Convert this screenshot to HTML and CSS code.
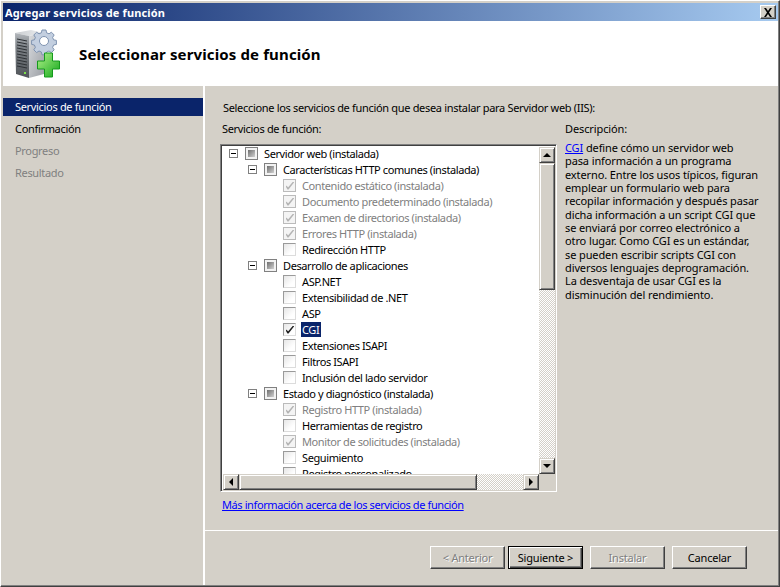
FILE: index.html
```html
<!DOCTYPE html>
<html lang="es">
<head>
<meta charset="utf-8">
<title>Agregar servicios de función</title>
<link rel="stylesheet" href="styles.css">
</head>
<body>
<div class="window">
  <div class="titlebar">
    <span class="title-text">Agregar servicios de función</span>
    <button class="close" aria-label="Cerrar"><svg width="10" height="9" viewBox="0 0 10 9"><path d="M1 0h2l2 3 2-3h2L6 4.500 9 9H7L5 6 3 9H1l3-4.500z" fill="#000"/></svg></button>
  </div>
  <header class="banner">
    <svg class="wizard-icon" width="46" height="50" viewBox="0 0 46 50">
      <defs>
        <linearGradient id="front" x1="0" x2="0" y1="0" y2="1"><stop offset="0" stop-color="#b4b8bd"/><stop offset=".3" stop-color="#7d8287"/><stop offset="1" stop-color="#4f5358"/></linearGradient>
        <linearGradient id="side" x1="0" x2="1" y1="0" y2="1"><stop offset="0" stop-color="#d9dbde"/><stop offset="1" stop-color="#9a9ea4"/></linearGradient>
        <linearGradient id="top" x1="0" x2="1" y1="0" y2="0"><stop offset="0" stop-color="#c9ccd0"/><stop offset="1" stop-color="#eceef0"/></linearGradient>
        <linearGradient id="plus" x1="0" x2="1" y1="0" y2="1"><stop offset="0" stop-color="#b4f28c"/><stop offset="1" stop-color="#12a81a"/></linearGradient>
      </defs>
      <path d="M1 4 17 1 30 4 15 7z" fill="url(#top)"/>
      <path d="M15 7 30 4v41L15 49z" fill="url(#side)"/>
      <path d="M1 4 15 7v42L2 45z" fill="url(#front)"/>
      <path d="M3 10 13 12M3 13 13 15M3 16 13 18M3 19 13 21M3 22 13 24M3 25 13 27M3 28 13 30M3 31 13 33M3 34 13 36M3 37 13 39" stroke="#2e3236" stroke-width="1"/>
      <rect x="10" y="43" width="2" height="2" fill="#7be04a"/>
      <g transform="translate(30 12)">
        <path d="M-2-11h4l.6 2.800 2.400 1 2.400-1.600 2.800 2.800-1.600 2.400 1 2.400 2.800.6v4l-2.800.6-1 2.400 1.600 2.400-2.800 2.800-2.400-1.600-2.400 1-.6 2.800h-4l-.6-2.800-2.400-1-2.400 1.600-2.800-2.800 1.600-2.400-1-2.400-2.800-.6v-4l2.800-.6 1-2.400-1.600-2.400 2.800-2.800 2.400 1.600 2.400-1z" fill="#c3cfe0" stroke="#7f93b0"/>
        <circle r="4.500" fill="#fff" stroke="#7f93b0"/>
      </g>
      <path d="M30.500 24h8v8h7v8h-7v8h-8v-8h-7v-8h7z" fill="url(#plus)" stroke="#149a1c"/>
    </svg>
    <h1 class="banner-title">Seleccionar servicios de función</h1>
  </header>
  <div class="main">
    <nav class="steps">
      <div class="step current">Servicios de función</div>
      <div class="step">Confirmación</div>
      <div class="step pending">Progreso</div>
      <div class="step pending">Resultado</div>
    </nav>
    <div class="content">
      <div class="panel">
        <p class="intro">Seleccione los servicios de función que desea instalar para Servidor web (IIS):</p>
        <div class="columns">
          <div class="left-col">
            <div class="label">Servicios de función:</div>
            <div class="tree">
              <div class="tree-view">
                <div class="rows">
                  <div class="row l0"><i class="exp"></i><i class="cb mixed"></i><span>Servidor web (instalada)</span></div>
                  <div class="row l1"><i class="exp"></i><i class="cb mixed"></i><span>Características HTTP comunes (instalada)</span></div>
                  <div class="row l2 off"><i class="cb dis"></i><span>Contenido estático (instalada)</span></div>
                  <div class="row l2 off"><i class="cb dis"></i><span>Documento predeterminado (instalada)</span></div>
                  <div class="row l2 off"><i class="cb dis"></i><span>Examen de directorios (instalada)</span></div>
                  <div class="row l2 off"><i class="cb dis"></i><span>Errores HTTP (instalada)</span></div>
                  <div class="row l2"><i class="cb"></i><span>Redirección HTTP</span></div>
                  <div class="row l1"><i class="exp"></i><i class="cb mixed"></i><span>Desarrollo de aplicaciones</span></div>
                  <div class="row l2"><i class="cb"></i><span>ASP.NET</span></div>
                  <div class="row l2"><i class="cb"></i><span>Extensibilidad de .NET</span></div>
                  <div class="row l2"><i class="cb"></i><span>ASP</span></div>
                  <div class="row l2"><i class="cb on"></i><span class="sel">CGI</span></div>
                  <div class="row l2"><i class="cb"></i><span>Extensiones ISAPI</span></div>
                  <div class="row l2"><i class="cb"></i><span>Filtros ISAPI</span></div>
                  <div class="row l2"><i class="cb"></i><span>Inclusión del lado servidor</span></div>
                  <div class="row l1"><i class="exp"></i><i class="cb mixed"></i><span>Estado y diagnóstico (instalada)</span></div>
                  <div class="row l2 off"><i class="cb dis"></i><span>Registro HTTP (instalada)</span></div>
                  <div class="row l2"><i class="cb"></i><span>Herramientas de registro</span></div>
                  <div class="row l2 off"><i class="cb dis"></i><span>Monitor de solicitudes (instalada)</span></div>
                  <div class="row l2"><i class="cb"></i><span>Seguimiento</span></div>
                  <div class="row l2"><i class="cb"></i><span>Registro personalizado</span></div>
                </div>
                <div class="vscroll">
                  <div class="sbtn up"></div>
                  <div class="vthumb"></div>
                  <div class="track"></div>
                  <div class="sbtn down"></div>
                </div>
              </div>
              <div class="hscroll">
                <div class="sbtn left"></div>
                <div class="hthumb"></div>
                <div class="track"></div>
                <div class="sbtn right"></div>
                <div class="corner"></div>
              </div>
            </div>
            <a class="more" href="#">Más información acerca de los servicios de función</a>
          </div>
          <aside class="desc">
            <div class="desc-label">Descripción:</div>
            <p class="desc-text"><a href="#">CGI</a> define cómo un servidor web<br>pasa información a un programa<br>externo. Entre los usos típicos, figuran<br>emplear un formulario web para<br>recopilar información y después pasar<br>dicha información a un script CGI que<br>se enviará por correo electrónico a<br>otro lugar. Como CGI es un estándar,<br>se pueden escribir scripts CGI con<br>diversos lenguajes deprogramación.<br>La desventaja de usar CGI es la<br>disminución del rendimiento.</p>
          </aside>
        </div>
      </div>
      <footer class="actions">
        <button class="btn" disabled>&lt; Anterior</button>
        <button class="btn default">Siguiente &gt;</button>
        <button class="btn gap" disabled>Instalar</button>
        <button class="btn gap">Cancelar</button>
      </footer>
    </div>
  </div>
</div>
</body>
</html>
```

FILE: styles.css
```css
* { box-sizing: border-box; }
html, body { margin: 0; padding: 0; }
body { width: 780px; height: 587px; overflow: hidden; font: 11px/13px "Noto Sans", sans-serif; letter-spacing: -.32px; color: #000; background: #d4d0c8; }
.window { width: 780px; height: 587px; display: flex; flex-direction: column; background: #d4d0c8; border-top: 1px solid #fff; border-left: 1px solid #fff; border-right: 1px solid #404040; border-bottom: 1px solid #404040; padding: 2px 1px 1px 2px; box-shadow: inset -1px -1px 0 #808080; }
.titlebar { height: 18px; flex: none; display: flex; align-items: center; justify-content: space-between; padding: 0 2px; background: linear-gradient(90deg, #0a246a, #a6caf0); color: #fff; font-weight: 700; }
.title-text { font-size: 11px; letter-spacing: .15px; }
.close { width: 16px; height: 14px; padding: 0; display: flex; align-items: center; justify-content: center; background: #d4d0c8; border: 1px solid; border-color: #fff #404040 #404040 #fff; box-shadow: inset -1px -1px 0 #808080; }
.banner { height: 65px; flex: none; display: flex; align-items: center; background: #fff; padding-left: 11px; }
.wizard-icon { margin-right: 19px; }
.banner-title { margin: 0; font: 700 15px/20px "Noto Sans", sans-serif; letter-spacing: .13px; }
.main { flex: 1; display: flex; min-height: 0; }
.steps { width: 200px; flex: none; padding-top: 12px; }
.step { height: 18px; margin-bottom: 4px; padding-left: 12px; line-height: 18px; }
.step.current { background: #0a246a; color: #fff; }
.step.pending { color: #808080; }
.content { flex: 1; display: flex; flex-direction: column; border-left: 2px solid #fff; }
.panel { flex: 1; padding: 14px 0 0 18px; border-bottom: 1px solid #fff; }
.intro { margin: 0 0 5px; line-height: 16px; }
.columns { display: flex; }
.left-col { width: 335px; flex: none; }
.label { height: 16px; margin-left: -1px; line-height: 16px; margin-bottom: 7px; }
.tree { width: 337px; height: 348px; margin-left: -3px; border: 1px solid; border-color: #808080 #fff #fff #808080; box-shadow: inset 1px 1px 0 #404040, inset -1px -1px 0 #d4d0c8; padding: 2px 1px 1px 2px; background: #fff; display: flex; flex-direction: column; letter-spacing: -.4px; }
.tree-view { flex: 1; min-height: 0; display: flex; }
.rows { flex: 1; overflow: hidden; }
.rows > .row:first-child { margin-top: -2px; }
.row { height: 16px; display: flex; align-items: center; white-space: nowrap; }
.row.l0 { padding-left: 6px; }
.row.l1 { padding-left: 25px; }
.row.l2 { padding-left: 60px; }
.row.off { color: #808080; }
.row span { padding: 1px 2px 1px 1px; line-height: 13px; margin-left: 5px; }
.row .sel { background: #0a246a; color: #fff; }
.exp { width: 9px; height: 9px; margin-right: 7px; border: 1px solid #808080; background: linear-gradient(#000, #000) center / 5px 1px no-repeat #fff; flex: none; }
.cb { width: 13px; height: 13px; flex: none; border: 1px solid; border-color: #9a9a9a #dcdcdc #dcdcdc #9a9a9a; background: linear-gradient(135deg, #e6e6e6, #fff 70%); position: relative; }
.cb.mixed { border: 1px solid #808080; background: linear-gradient(135deg, #6e6e6e, #d0d0d0) center / 7px 7px no-repeat #f2f2f2; }
.cb.dis { background: #f4f4f4; border-color: #bbb; }
.cb.on::after, .cb.dis::after { content: ""; position: absolute; left: 2px; top: 2px; width: 8px; height: 8px; background: #222; clip-path: polygon(0 50%, 28% 72%, 88% 0, 100% 0, 100% 14%, 32% 100%, 18% 100%, 0 68%); }
.cb.dis::after { background: #b4b4b4; }
.vscroll { width: 16px; flex: none; display: flex; flex-direction: column; }
.hscroll { height: 16px; flex: none; display: flex; }
.sbtn { width: 16px; height: 16px; flex: none; background: #d4d0c8; border: 1px solid; border-color: #d4d0c8 #404040 #404040 #d4d0c8; box-shadow: inset 1px 1px 0 #fff, inset -1px -1px 0 #808080; position: relative; }
.sbtn::after { content: ""; position: absolute; left: 3px; top: 4px; width: 0; height: 0; border: 4px solid transparent; }
.up::after { border-bottom-color: #000; border-top-width: 0; top: 5px; }
.down::after { border-top-color: #000; border-bottom-width: 0; top: 5px; }
.left::after { border-right-color: #000; border-left-width: 0; left: 5px; top: 3px; }
.right::after { border-left-color: #000; border-right-width: 0; left: 5px; top: 3px; }
.track { flex: 1; background: repeating-conic-gradient(#fff 0 25%, #d4d0c8 0 50%) 0 0 / 2px 2px; }
.vthumb { height: 127px; flex: none; background: #d4d0c8; border: 1px solid; border-color: #d4d0c8 #404040 #404040 #d4d0c8; box-shadow: inset 1px 1px 0 #fff, inset -1px -1px 0 #808080; }
.hthumb { width: 238px; flex: none; background: #d4d0c8; border: 1px solid; border-color: #d4d0c8 #404040 #404040 #d4d0c8; box-shadow: inset 1px 1px 0 #fff, inset -1px -1px 0 #808080; }
.corner { width: 16px; flex: none; background: #d4d0c8; }
.more { display: block; margin: 6px 0 0 -1px; line-height: 14px; color: #00f; letter-spacing: -.4px; }
.desc { margin-left: 7px; width: 210px; flex: none; letter-spacing: -.11px; }
.desc-label { height: 16px; line-height: 16px; margin-bottom: 4px; }
.desc-text { margin: 0; line-height: 13.330px; white-space: nowrap; }
.desc-text a { color: #00f; }
.actions { height: 54px; flex: none; display: flex; padding: 15px 0 0 225px; gap: 3px; }
.btn { width: 75px; height: 23px; padding: 0; font: 11px/13px "Noto Sans", sans-serif; letter-spacing: -.2px; color: #000; background: #d4d0c8; border: 1px solid; border-color: #fff #404040 #404040 #fff; box-shadow: inset -1px -1px 0 #808080; }
.btn:disabled { color: #808080; text-shadow: 1px 1px 0 #fff; }
.btn.default { border: 1px solid #000; box-shadow: inset 1px 1px 0 #fff, inset -1px -1px 0 #404040, inset -2px -2px 0 #808080; }
.btn.gap { margin-left: 4px; }
```
